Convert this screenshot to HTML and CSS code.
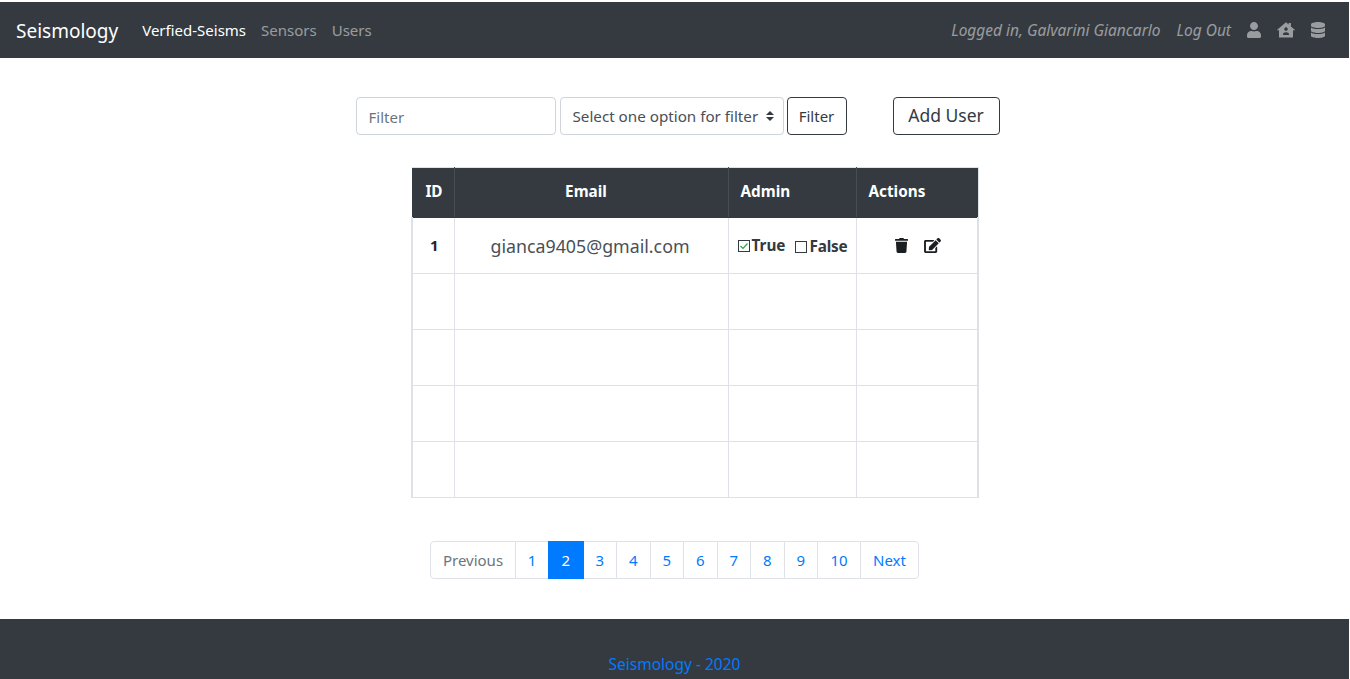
FILE: index.html
```html
<!DOCTYPE html>
<html lang="en">
<head>
<meta charset="utf-8">
<title>Seismology</title>
<link rel="stylesheet" href="styles.css">
</head>
<body>
<nav class="navbar">
  <a class="brand" href="#">Seismology</a>
  <ul class="nav-links">
    <li><a class="active" href="#">Verfied-Seisms</a></li>
    <li><a href="#">Sensors</a></li>
    <li><a href="#">Users</a></li>
  </ul>
  <div class="nav-right">
    <em class="nav-text logged">Logged in, Galvarini Giancarlo</em>
    <em class="nav-text logout">Log Out</em>
    <svg class="nav-icon user" viewBox="0 0 448 512"><path d="M224 256c70.700 0 128-57.300 128-128S294.700 0 224 0 96 57.300 96 128s57.300 128 128 128zm89.600 32h-16.700c-22.200 10.200-46.900 16-72.900 16s-50.600-5.800-72.900-16h-16.700C60.200 288 0 348.200 0 422.400V464c0 26.500 21.500 48 48 48h352c26.500 0 48-21.500 48-48v-41.600c0-74.200-60.200-134.400-134.400-134.400z"/></svg>
    <svg class="nav-icon house" viewBox="0 0 576 512"><path fill-rule="evenodd" d="M288 6 L372 78 V32 H444 V140 L570 248 L546 276 L512 247 V496 H64 V247 L30 276 L6 248 Z M288 168 a56 56 0 1 0 .01 0 Z M192 416 H384 V392 C384 352 344 328 288 328 S192 352 192 392 Z"/></svg>
    <svg class="nav-icon db" viewBox="0 0 448 512"><path d="M448 73.100v45.700C448 159.100 347.700 192 224 192S0 159.100 0 118.900V73.100C0 32.900 100.300 0 224 0s224 32.900 224 73.100zM448 176v102.900C448 319.100 347.700 352 224 352S0 319.100 0 278.900V176c48.100 33.100 136.200 48.600 224 48.600S399.900 209.100 448 176zm0 160v102.900C448 479.100 347.700 512 224 512S0 479.100 0 438.900V336c48.100 33.100 136.200 48.600 224 48.600S399.900 369.100 448 336z"/></svg>
  </div>
</nav>

<main class="content">
  <div class="toolbar">
    <input class="field filter-input" type="text" placeholder="Filter">
    <div class="field filter-select">
      <span>Select one option for filter</span>
      <svg class="select-arrows" viewBox="0 0 8 10"><path d="M4 0 L8 4 H0 Z M4 10 L0 6 H8 Z"/></svg>
    </div>
    <button class="btn btn-filter" type="button">Filter</button>
    <button class="btn btn-add" type="button">Add User</button>
  </div>

  <table class="users">
    <colgroup>
      <col class="c-id"><col class="c-email"><col class="c-admin"><col class="c-actions">
    </colgroup>
    <thead>
      <tr><th class="center id-head">ID</th><th class="center email-head">Email</th><th>Admin</th><th>Actions</th></tr>
    </thead>
    <tbody>
      <tr>
        <td class="center id-cell">1</td>
        <td class="center email-cell">gianca9405@gmail.com</td>
        <td class="admin-cell">
          <div class="choices">
            <span class="choice">
              <svg class="box" viewBox="0 0 12 12"><rect x=".5" y=".5" width="11" height="11" fill="none" stroke="#343a40"/><path d="M2.500 6 L5 8.500 L9.500 3.500" fill="none" stroke="#28a745" stroke-width="1.200"/></svg>True
            </span>
            <span class="choice choice-false">
              <svg class="box" viewBox="0 0 12 12"><rect x=".5" y=".5" width="11" height="11" fill="none" stroke="#343a40"/></svg>False
            </span>
          </div>
        </td>
        <td class="actions-cell">
          <div class="actions">
            <svg class="act trash" viewBox="0 0 448 512"><path d="M432 32H312l-9.400-18.700A24 24 0 0 0 281.100 0H166.800a23.700 23.700 0 0 0-21.400 13.300L136 32H16A16 16 0 0 0 0 48v32a16 16 0 0 0 16 16h416a16 16 0 0 0 16-16V48a16 16 0 0 0-16-16zM53.200 467a48 48 0 0 0 47.900 45h245.800a48 48 0 0 0 47.900-45L416 128H32z"/></svg>
            <svg class="act edit" viewBox="0 0 576 512"><path d="M402.600 83.200l90.200 90.200c3.800 3.800 3.800 10 0 13.800L274.400 405.600l-92.800 10.300c-12.400 1.400-22.900-9.100-21.500-21.500l10.300-92.800L388.800 83.200c3.800-3.800 10-3.800 13.800 0zm162-22.900l-48.800-48.800c-15.200-15.200-39.900-15.200-55.200 0l-35.400 35.400c-3.800 3.800-3.800 10 0 13.800l90.200 90.200c3.800 3.800 10 3.800 13.800 0l35.400-35.400c15.200-15.300 15.200-40 0-55.200zM384 346.200V448H64V128h229.800c3.200 0 6.200-1.300 8.500-3.500l40-40c7.600-7.600 2.200-20.500-8.500-20.500H48C21.500 64 0 85.500 0 112v352c0 26.500 21.500 48 48 48h352c26.500 0 48-21.500 48-48V306.200c0-10.700-12.900-16-20.500-8.500l-40 40c-2.200 2.300-3.500 5.300-3.500 8.500z"/></svg>
          </div>
        </td>
      </tr>
      <tr><td></td><td></td><td></td><td></td></tr>
      <tr><td></td><td></td><td></td><td></td></tr>
      <tr><td></td><td></td><td></td><td></td></tr>
      <tr><td></td><td></td><td></td><td></td></tr>
    </tbody>
  </table>

  <ul class="pagination">
    <li class="disabled w-prev"><a href="#">Previous</a></li>
    <li class="w-first"><a href="#">1</a></li>
    <li class="current w2"><a href="#">2</a></li>
    <li class="w1"><a href="#">3</a></li>
    <li class="w1"><a href="#">4</a></li>
    <li class="w1"><a href="#">5</a></li>
    <li class="w1"><a href="#">6</a></li>
    <li class="w1"><a href="#">7</a></li>
    <li class="w1"><a href="#">8</a></li>
    <li class="w1"><a href="#">9</a></li>
    <li class="w10"><a href="#">10</a></li>
    <li class="w-next"><a href="#">Next</a></li>
  </ul>
</main>

<footer class="footer"><a href="#">Seismology - 2020</a></footer>
</body>
</html>
```

FILE: styles.css
```css
* { box-sizing: border-box; }
html, body { margin: 0; height: 679px; overflow: hidden; }
body {
  width: 1349px;
  padding-top: 2px;
  background: #fff;
  font-family: "Noto Sans", "Open Sans", sans-serif;
  font-size: 15px;
  color: #212529;
}
a { text-decoration: none; }

.navbar {
  height: 56px;
  background: #343a40;
  display: flex;
  align-items: center;
  padding: 0 16px;
}
.brand { color: #fff; font-size: 19px; margin-right: 24px; padding-top: 2px; }
.nav-links { display: flex; gap: 15px; list-style: none; margin: 0; padding: 0; }
.nav-links a { color: rgba(255,255,255,.5); font-size: 15px; }
.nav-links a.active { color: #fff; }
.nav-right { margin-left: auto; display: flex; align-items: center; }
.nav-text { color: rgba(255,255,255,.5); font-size: 15.500px; }
.logged { margin-right: 16px; }
.logout { margin-right: 16px; }
.nav-icon { fill: rgba(255,255,255,.5); height: 16px; display: block; }
.nav-icon.user { width: 14px; margin-right: 16px; }
.nav-icon.house { width: 18px; margin-right: 16px; }
.nav-icon.db { width: 14px; margin-right: 8px; }

.content { height: 561px; padding-top: 39px; }
.toolbar {
  display: flex;
  justify-content: center;
  align-items: stretch;
  height: 38px;
  padding-left: 6px;
}
.field {
  height: 38px;
  border: 1px solid #ced4da;
  border-radius: 4px;
  background: #fff;
  color: #495057;
  font: inherit;
}
.filter-input { width: 200px; padding: 2px 12px 0; margin-right: 4px; }
.filter-input::placeholder { color: #6c757d; opacity: 1; }
.filter-select {
  width: 224px;
  margin-right: 3px;
  padding: 0 9px 0 12px;
  font-size: 15.200px;
  display: flex;
  align-items: center;
  justify-content: space-between;
}
.select-arrows { width: 8px; height: 10px; fill: #343a40; }
.btn {
  height: 38px;
  background: #fff;
  border: 1px solid #343a40;
  border-radius: 4px;
  color: #343a40;
  font: inherit;
  padding: 0;
}
.btn-filter { width: 60px; }
.btn-add { width: 107px; margin-left: 46px; font-size: 17.500px; padding-bottom: 2px; }

.users {
  border-collapse: collapse;
  table-layout: fixed;
  width: 566px;
  margin: 32px 0 0 411px;
  border: 1px solid #dee2e6;
}
.c-id { width: 42px; }
.c-email { width: 274px; }
.c-admin { width: 128px; }
.c-actions { width: 122px; }
.users th {
  height: 50px;
  background: #343a40;
  color: #fff;
  font-size: 15.300px;
  font-weight: 700;
  text-align: left;
  padding: 0 12px 3px;
  border: 1px solid #454d55;
  border-top-color: #dee2e6;
  border-bottom-color: #343a40;
}
.users th:first-child { border-left-color: #343a40; }
.users th:last-child { border-right-color: #dee2e6; }
.users td {
  height: 56px;
  border: 1px solid #dee2e6;
  padding: 0;
  color: #343a40;
}
.users td:first-child { border-left-width: 2px; }
.users td:last-child { border-right-width: 2px; }
.users .center { text-align: center; }
.users th.center { padding: 0 0 4px; }
.users th.id-head { padding-left: 2px; }
.users th.email-head { padding-right: 10px; }
.id-cell { font-weight: 700; font-size: 15px; color: #212529 !important; padding: 0 0 2px 2px !important; }
.email-cell { font-size: 17.800px; padding-right: 2px !important; color: #495057 !important; }
.choices { display: flex; align-items: center; justify-content: space-between; padding: 0 8px 2px 9px; font-weight: 700; font-size: 15.300px; }
.choice { display: flex; align-items: center; gap: 2px; }
.choice-false { gap: 3px; letter-spacing: -.2px; padding-top: 2px; }
.box { width: 12px; height: 12px; margin-top: 2px; }
.actions { display: flex; justify-content: center; gap: 16px; padding-left: 3px; }
.act { height: 15px; fill: #1b1e21; display: block; }
.act.trash { width: 13px; }
.act.edit { width: 17px; }

.pagination {
  display: flex;
  list-style: none;
  margin: 43px 0 0 430px;
  padding: 0;
  height: 38px;
}
.pagination li { margin-left: -1px; border: 1px solid #dee2e6; display: flex; align-items: center; justify-content: center; background: #fff; }
.pagination li:first-child { margin-left: 0; border-radius: 4px 0 0 4px; }
.pagination li:last-child { border-radius: 0 4px 4px 0; }
.pagination a { color: #007bff; font-size: 15px; }
.pagination .disabled a { color: #6c757d; }
.pagination .current { background: #007bff; border-color: #007bff; position: relative; }
.pagination .current a { color: #fff; }
.w-prev { width: 86px; }
.w-first { width: 34px; }
.w1 { width: 34.500px; }
.w2 { width: 35.500px; }
.w10 { width: 44px; }
.w-next { width: 59px; }

.footer {
  height: 60px;
  background: #343a40;
  text-align: center;
  padding-top: 34px;
}
.footer a { color: #007bff; font-size: 15.500px; }
```
